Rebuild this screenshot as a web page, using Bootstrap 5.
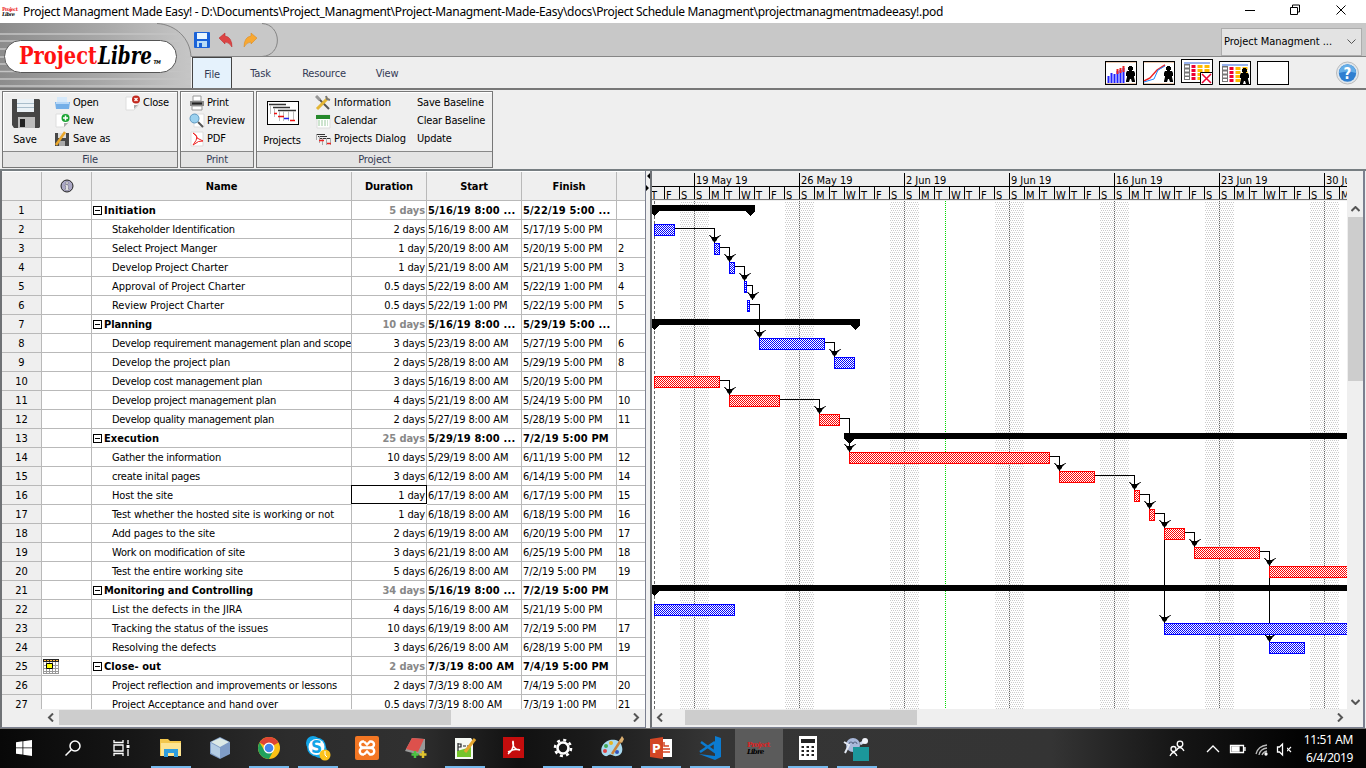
<!DOCTYPE html>
<html lang="en">
<head>
<meta charset="utf-8">
<meta name="viewport" content="width=device-width, initial-scale=1">
<title>Project Managment Made Easy!</title>
<link href="https://cdn.jsdelivr.net/npm/bootstrap@5.3.0/dist/css/bootstrap.min.css" rel="stylesheet">
<style>
body{width:1366px;height:768px;overflow:hidden;background:#efefef;color:#000;font:11px/14px "DejaVu Sans Condensed","DejaVu Sans",sans-serif;letter-spacing:-.2px;white-space:nowrap}
svg{display:block;flex:none}
.titlebar{height:23px;background:#fff;font:12px/23px "Noto Sans","Open Sans",sans-serif;letter-spacing:0}
.banner{height:67px;background:#eee}
.banner-art{left:0;top:0;z-index:0}
.strip{height:34px;background:#c8c8c8;border-bottom:1px solid #858585;padding:0 4px 0 193px}
.picker{width:141px;height:28px;background:#e3e3e3;border:1px solid #adadad;margin-top:5px;padding:0 5px 0 2px;z-index:2}
.picker,.picker:hover{font:inherit;color:#000}
.tabs{height:33px;border-bottom:2px solid #777;padding-left:192px;color:#333a55;z-index:2}
.tabs a{color:inherit;text-decoration:none;line-height:35px;height:32px;text-align:center}
.tab-on{background:#e5f2fc;border:1px solid #444;border-bottom:0;width:40px}
.tabs .tab-on{line-height:34px;height:31px}
.view-btn{width:32px;height:24px;background:#fff;border:1px solid #000}
.ribbon{height:79px;padding:1px 0 0 2px;background:#efefef}
.group{height:77px;border:1px solid #777;margin-right:3px;box-shadow:inset 1px 1px #fff}
.group-body{height:59px}
.group-name{height:16px;line-height:15px;background:#e4e4e4;border-top:1px solid #888;text-align:center;color:#333a55}
.tool{height:18px;gap:2px}
.big-tool{text-align:center}
.panes{height:559px;border-top:2px solid #777e82;background:#efefef}
.sheet{width:646px;height:557px;border-left:2px solid #6f7276;border-right:1px solid #7b8090;border-bottom:1px solid #7b8090;background:#efefef}
.rows-view{height:538px;overflow:hidden;background:#fff}
.sheet-row{height:19px;line-height:19px}
.sheet-row>div,.sheet-head>div{border-right:1px solid #b9b9b9;border-bottom:1px solid #b9b9b9;overflow:hidden;flex:none}
.sheet-head{height:30px;line-height:29px;background:#efefef;font-weight:700;text-align:center;border-top:1px solid #fff;letter-spacing:-.1px}
.c0{width:40px;background:#efefef;text-align:center}
.c1{width:50px}.c2{width:260px}.c3{width:75px;text-align:right}.c4,.c5{width:95px}.c6{width:29px;border-right:0!important}
.sheet-row .c0{letter-spacing:0}
.sheet-row .c2{padding-left:20px;letter-spacing:-.17px}.sheet-row .c6{padding-left:1px}.sheet-row .c5,.sheet-row .c4{padding-left:1px;letter-spacing:-.11px}.sheet-row .c3{padding-right:1px}
.phase>div:not(.c0){font-weight:700;letter-spacing:-.06px}
.phase>.c4:not(.c0),.phase>.c5:not(.c0){letter-spacing:.18px}
.phase .c3{color:#888}
.phase .c2{padding-left:1px!important}
.fold{width:9px;height:9px;border:1px solid #000;position:relative;margin-right:2px}
.fold::after{content:"";position:absolute;left:1px;right:1px;top:3px;height:1px;background:#000}
.now-cell{border:1px solid #000!important;margin-left:-1px;width:76px!important;height:19px;margin-top:-1px;line-height:20px}
.hscroll{height:17px;background:#efefef}
.thumb{background:#cdcdcd;height:15px}
.splitter{width:4px;background:#f0f0f0}
.chart{width:715px;border-left:2px solid #6f7276;border-right:2px solid #7b8090;border-bottom:1px solid #7b8090}
.chart text{font-size:11px;letter-spacing:-.05px}
.vscroll{width:17px;height:508px;margin-top:30px;background:#efefef;padding-top:5px}
.vthumb{width:15px;height:164px;background:#cdcdcd;margin:5px 0 0 1px}
.taskbar{height:40px;background:linear-gradient(90deg,#080808 0,#151515 9%,#2c2c2c 21%,#303030 30%,#111 38%,#1a1a1a 43%,#353535 52%,#343434 77%,#161616 86%,#030303 95%);border-top:1px solid #777}
.app{height:39px;width:48px;margin-right:1.03px;padding-bottom:1px;position:relative}
.running::after{content:"";position:absolute;left:4px;right:4px;bottom:0;height:2px;background:#76b9ed}
.app-on{background:#5b5b5b}
.clock{font:12px/18px "Noto Sans","Open Sans",sans-serif;color:#fff;letter-spacing:-.4px}
</style>
</head>
<body>
<header>
  <div class="titlebar d-flex align-items-center">
    <svg width="23" height="23" viewBox="0 0 23 23"><text x="2" y="11" font-size="5" font-weight="700" fill="#e22" textLength="16" font-family="DejaVu Serif">Project</text><text x="2" y="16" font-size="5" font-style="italic" font-weight="700" textLength="13" font-family="DejaVu Serif">Libre</text></svg>
    <span data-w="920">Project Managment Made Easy! - D:\Documents\Project_Managment\Project-Managment-Made-Easy\docs\Project Schedule Managment\projectmanagmentmadeeasy!.pod</span>
    <svg class="ms-auto" width="126" height="23" viewBox="1240 0 126 23" fill="none" stroke="#000"><path d="M1245 10.5h10M1290.500 7.500h7v7h-7zM1292.500 7v-2h7v7h-2M1336.500 5.500l9 9m0-9l-9 9"/></svg>
  </div>
  <div class="banner position-relative">
    <div class="strip d-flex align-items-start justify-content-end">
      <button class="picker btn rounded-0 d-flex align-items-center justify-content-between position-relative"><span data-w="108">Project Managment ...</span><svg width="9" height="6" fill="none" stroke="#555"><path d="M.5 .5l4 4 4-4"/></svg></button>
    </div>
    <nav class="tabs d-flex align-items-end position-relative">
      <a href="#" class="tab-on">File</a><a href="#" style="margin-left:17px;width:23px">Task</a><a href="#" style="margin-left:29px;width:46px">Resource</a><a href="#" style="margin-left:28px;width:24px">View</a>
      <div class="ms-auto d-flex align-items-center" style="gap:6px;margin-right:7px;height:31px">
        <svg width="32" height="24"><rect x=".5" y=".5" width="31" height="23" fill="#fff" stroke="#000"/><path d="M1 1.500h30M1 22.500h30" stroke="#e8c8b0"/><path d="M3.500 15v7M6.500 12v10M9.500 13v9M12.500 10v12M15.500 9v13M18.500 7v15" stroke="#22f" stroke-width="2"/><path d="M12.500 8v5M15.500 7v5M18.500 5v6" stroke="#e22" stroke-width="2"/><use href="#man" x="20" y="5"/></svg>
        <svg width="32" height="24"><defs><g id="man"><path d="M4 0h3v1h1v3h-1v1h2l1 2v3h-1v1l1 4v1h-3l-1-3h-1l-1 3H1v-1l1-4v-1H1V7l1-2h2V4H3V1h1z"/></g></defs><rect x=".5" y=".5" width="31" height="23" fill="#fff" stroke="#000"/><path d="M1 1.500h30M1 22.500h30" stroke="#e8c8b0"/><path d="M1 20l6-3 7-8 8-5" stroke="#e22" stroke-width="1.500" fill="none"/><path d="M1 21l10-3 4-9 7-4" stroke="#28f" fill="none"/><use href="#man" x="20" y="5"/></svg>
        <svg width="32" height="27"><use href="#grid"/><path d="M19.500 13.500h12v12h-12z" fill="#fff" stroke="#000"/><path d="M21 15l9 9m0-9l-9 9" stroke="#e03" stroke-width="1.500"/></svg>
        <svg width="32" height="24"><defs><g id="grid"><rect x=".5" y=".5" width="31" height="23" fill="#fff" stroke="#000"/><path d="M3 4h26" stroke="#99b3ee" stroke-width="2"/><path d="M3 5h6v16H3z" fill="#777"/><path d="M4 7.500h4M4 11.500h4M4 15.500h4M4 19h4" stroke="#fff" stroke-width="2"/><path d="M12.500 6v15" stroke="#e03" stroke-width="4" stroke-dasharray="3 1"/><path d="M19 6v15M26 6v12" stroke="#fb0" stroke-width="5" stroke-dasharray="3 1"/></g></defs><use href="#grid"/><use href="#man" x="20" y="7"/></svg>
        <div class="view-btn"></div>
        <svg width="23" height="26" style="margin-left:41px"><circle cx="11.500" cy="13" r="11" fill="#dfe6ec" stroke="#bbb"/><circle cx="11.500" cy="13" r="8.700" fill="#2f7fd0"/><path d="M3 13a8.500 8.500 0 0117 0q-8-3-17 0" fill="#65aee8"/><text x="7.500" y="18.500" fill="#fff" font-size="15" font-weight="700">?</text></svg>
      </div>
    </nav>
    <svg class="banner-art position-absolute" width="280" height="65" viewBox="0 23 280 65">
      <defs><linearGradient id="steel"><stop offset="0" stop-color="#8c8c8c"/><stop offset=".55" stop-color="#a9a9a9"/><stop offset="1" stop-color="#c6c6c6"/></linearGradient></defs>
      <path d="M157 23c18 1 33 15 34 33v32H0V23z" fill="url(#steel)"/>
      <path d="M0 34h177M0 41h182M0 49h187M0 57h190M0 64h190M0 71.500h190M0 79h190M0 86h190" stroke="#c4c4c4" stroke-width="1.500"/>
      <path d="M157 23.500c19 1 33 15 34 33M262 23.500c20 1 21 32 0 33" stroke="#858585" fill="none"/>
      <rect x="4.500" y="40.500" width="172" height="32" rx="16" fill="#fff" stroke="#555"/>
      <g font-family="DejaVu Serif Condensed,DejaVu Serif" font-weight="700" font-size="24"><text x="19" y="64" fill="#f11" textLength="78" lengthAdjust="spacingAndGlyphs" style="letter-spacing:0">Project</text><text x="98" y="64" font-style="italic" textLength="54" lengthAdjust="spacingAndGlyphs" style="letter-spacing:0">Libre</text></g>
      <text x="153.500" y="64" font-size="5" font-style="italic" font-weight="700">TM</text>
      <rect x="194" y="32" width="16" height="16" rx="1" fill="#1a62d8"/><path d="M197 33h10v6h-10z" fill="#e9f6ff"/><path d="M197 41h10v6h-10z" fill="#b9dcf6"/><path d="M199 43h3v4h-3z" fill="#1a62d8"/>
      <path d="M219 38l6-5v3q7 1 7 11q-3-5-7-5v2z" fill="#dc4444" stroke="#b22" stroke-width=".5"/>
      <path d="M257 38l-6-5v3q-7 1-7 11q3-5 7-5v2z" fill="#f8a832" stroke="#d88416" stroke-width=".5"/>
    </svg>
  </div>
  <div class="ribbon d-flex">
    <section class="group" style="width:176px"><div class="group-body d-flex">
      <div class="big-tool" style="width:44px;padding-top:7px"><svg width="30" height="30" style="margin-left:8px"><path d="M1 0h27l1 1v27l-1 1H3l-2-3z" fill="#454545"/><path d="M6 0h17v13H6z" fill="#eaf1f6"/><path d="M6 4.500h17M6 8.500h17" stroke="#a9bdcb"/><path d="M7 18h17v11H7z" fill="#bbb"/><path d="M9 20h5v8H9z" fill="#222"/></svg><div style="margin-top:4px">Save</div></div>
      <div style="padding:2px 0 0 7px;width:78px">
        <div class="tool d-flex align-items-center"><svg width="17" height="16"><path d="M3 2h10v5H3z" fill="#d6e9fa"/><path d="M1 7h15l-1 7H2z" fill="#74afe8"/><path d="M2 7h13v2H2z" fill="#b8d8f7"/></svg>Open</div>
        <div class="tool d-flex align-items-center"><svg width="17" height="16"><path d="M2 1h12v9l-4 4H2z" fill="#fff" stroke="#ddd"/><path d="M14 10l-4 0v4z" fill="#aaa"/><circle cx="11.500" cy="5" r="4" fill="#18a331"/><path d="M11.500 2.500v5M9 5h5" stroke="#fff" stroke-width="1.500"/></svg>New</div>
        <div class="tool d-flex align-items-center"><svg width="17" height="16"><path d="M1 2h14v13H1z" fill="#484848"/><path d="M4 2h8v5H4z" fill="#ddd"/><path d="M5 10h6v5H5z" fill="#aaa"/><path d="M2 14L11 1" stroke="#eaa72c" stroke-width="2.500"/></svg>Save as</div>
      </div>
      <div style="padding:2px 0 0 0"><div class="tool d-flex align-items-center"><svg width="16" height="16"><path d="M1 2h12v9l-4 4H1z" fill="#fff" stroke="#ddd"/><path d="M13 10l-4 0v4z" fill="#aaa"/><circle cx="11" cy="4.500" r="4" fill="#c2281e"/><path d="M9.500 3l3 3m0-3l-3 3" stroke="#fff" stroke-width="1.300"/></svg>Close</div></div>
    </div><div class="group-name">File</div></section>
    <section class="group" style="width:74px;margin:0 2px 0 -1px"><div class="group-body" style="padding:2px 0 0 8px">
      <div class="tool d-flex align-items-center"><svg width="16" height="16"><path d="M4 1h8v5H4z" fill="#fff" stroke="#999"/><path d="M1 6h14v5H1z" fill="#888"/><path d="M3 8.500h10" stroke="#222" stroke-width="2"/><path d="M3 11h10v4H3z" fill="#fff" stroke="#999"/></svg>Print</div>
      <div class="tool d-flex align-items-center"><svg width="16" height="16"><path d="M5 1h10v13H5z" fill="#fff" stroke="#ddd"/><path d="M9 9l5 5" stroke="#555" stroke-width="2"/><circle cx="5.500" cy="5.500" r="4.500" fill="#9bd1ef" stroke="#5e98c0"/></svg><span data-w="38">Preview</span></div>
      <div class="tool d-flex align-items-center"><svg width="16" height="16"><path d="M2 1h12v14H2z" fill="#fff" stroke="#ddd"/><path d="M4 2q4 2 4 5l6 3q-4-1-10 4q4-5 4-8q-1-2-4-4" fill="none" stroke="#e22"/></svg>PDF</div>
    </div><div class="group-name">Print</div></section>
    <section class="group" style="width:237px"><div class="group-body d-flex">
      <div class="big-tool" style="width:50px;padding-top:9px"><svg width="32" height="25" style="margin-left:10px"><rect x=".5" y=".5" width="31" height="23" fill="#fff" stroke="#000"/><path d="M2 3.500h17M6 6.500h17M11 9.500h18" stroke="#333" stroke-width="1.500"/><path d="M3.500 4v9M7.500 7v9M12.500 10v10M16.500 10v10M21.500 10v10M26.500 10v10" stroke="#bbb"/><path d="M7 12.500h3M11 15.500h6M23 19.500h5" stroke="#e11" stroke-width="1.500"/><path d="M17 17.500h5" stroke="#22e" stroke-width="1.500"/></svg><div style="margin-top:8px">Projects</div></div>
      <div style="padding:2px 0 0 8px;width:110px">
        <div class="tool d-flex align-items-center"><svg width="17" height="16" fill="none"><path d="M2 2l12 12" stroke="#555" stroke-width="2"/><path d="M2 14L13 3" stroke="#e4b636" stroke-width="3"/><path d="M11 1l1 3 3 1" stroke="#777" stroke-width="2"/><path d="M1 1l4 4" stroke="#999" stroke-width="3"/></svg><span data-w="57">Information</span></div>
        <div class="tool d-flex align-items-center"><svg width="17" height="16"><path d="M2 2h13v13H2z" fill="#fff" stroke="#ddd"/><path d="M1 2h14v4H1z" fill="#26892b"/><path d="M3 8h10M3 10h10M3 12h10" stroke="#9bc99e" stroke-dasharray="2 1"/></svg>Calendar</div>
        <div class="tool d-flex align-items-center"><svg width="17" height="16"><path d="M1 3.500h9M3 5.500h9M5 7.500h11" stroke="#333"/><path d="M1.500 3v6M4.500 5v7M7.500 7v7M11.500 7v7M15.500 7v7" stroke="#aaa"/><path d="M4 9.500h5M12 12.500h4" stroke="#e22" stroke-width="1.500"/></svg><span data-w="72">Projects Dialog</span></div>
      </div>
      <div style="padding-top:2px"><div class="tool d-flex align-items-center">Save Baseline</div><div class="tool d-flex align-items-center">Clear Baseline</div><div class="tool d-flex align-items-center">Update</div></div>
    </div><div class="group-name">Project</div></section>
  </div>
</header>
<main class="panes d-flex">
  <section class="sheet">
    <div class="rows-view">
      <div class="sheet-head d-flex"><div class="c0"></div><div class="c1 d-flex align-items-center justify-content-center"><svg width="14" height="14"><circle cx="7" cy="7" r="6" fill="#aaa7c4" stroke="#222"/><path d="M6 3h2v2H6zM5 6h3v4h1v1H5v-1h1V7H5z" fill="#fff" stroke="#555" stroke-width=".4"/></svg></div><div class="c2">Name</div><div class="c3 text-center">Duration</div><div class="c4">Start</div><div class="c5">Finish</div><div class="c6"></div></div>
      <div id="rows"></div>
    </div>
    <div class="hscroll d-flex align-items-center" style="padding-left:45px"><svg width="12" height="9" fill="none" stroke="#555" stroke-width="2"><path d="M6 .5l-4 4 4 4"/></svg><div class="thumb" style="width:392px"></div><svg class="ms-auto" width="12" height="9" fill="none" stroke="#555" stroke-width="2"><path d="M1 .5l4 4-4 4"/></svg></div>
  </section>
  <div class="splitter"><svg width="4" height="24"><path d="M4 2v6L1 5zM0 14v6l3-3z"/></svg></div>
  <section class="chart">
    <div class="d-flex"><svg id="gantt" width="695" height="538" viewBox="652 171 695 538" shape-rendering="crispEdges"></svg>
      <div class="vscroll d-flex flex-column"><svg width="9" height="6" style="margin-left:4px" fill="none" stroke="#555" stroke-width="2"><path d="M.5 5l4-4 4 4"/></svg><div class="vthumb"></div><svg class="mt-auto mb-1" width="9" height="6" style="margin-left:4px" fill="none" stroke="#555" stroke-width="2"><path d="M.5 1l4 4 4-4"/></svg></div></div>
    <div class="hscroll d-flex align-items-center" style="padding-left:3px;padding-right:17px"><svg width="12" height="9" fill="none" stroke="#555" stroke-width="2"><path d="M7 .5l-4 4 4 4"/></svg><div class="thumb" style="width:232px;margin-left:18px"></div><svg class="ms-auto" width="9" height="9" fill="none" stroke="#555" stroke-width="2"><path d="M1 .5l4 4-4 4"/></svg></div>
  </section>
</main>
<footer class="taskbar d-flex align-items-center">
  <div class="app d-flex align-items-center justify-content-center"><svg width="16" height="16" fill="#fff"><path d="M0 2.300l6.500-1V7.500H0zM7.300 1.200L16 0v7.500H7.300zM0 8.300h6.500v6.200L0 13.700zM7.300 8.300H16V16l-8.700-1.200z"/></svg></div>
  <div class="app d-flex align-items-center justify-content-center"><svg width="16" height="16" fill="none" stroke="#fff" stroke-width="1.500"><circle cx="10" cy="6" r="5"/><path d="M6.500 9.500L.5 15.500"/></svg></div>
  <div class="app d-flex align-items-center justify-content-center"><svg width="18" height="16" fill="none" stroke="#fff" stroke-width="1.300"><path d="M1 0v2.500h9V0M1 16v-2.500h9V16M1 5h9v6H1zM15 0v4M15 9v7"/><path d="M13.500 5h3v3h-3z" fill="#fff" stroke="none"/></svg></div>
  <div class="app running d-flex align-items-center justify-content-center"><svg width="22" height="20"><path d="M0 3V1h8l2 2h11v15H0z" fill="#f3c74c"/><path d="M1 5h20v13H1z" fill="#fde491"/><path d="M4 19v-8h14v8h-4v-4H8v4z" fill="#2f9ede"/></svg></div>
  <div class="app d-flex align-items-center justify-content-center"><svg width="22" height="22"><path d="M11 0l10 5v12l-10 5L1 17V5z" fill="#7f9cc6"/><path d="M11 1l9 4-9 5-9-5z" fill="#dce9e6"/><path d="M2 6l9 5v10L2 16z" fill="#b4cde4"/></svg></div>
  <div class="app running d-flex align-items-center justify-content-center"><svg width="22" height="22" viewBox="-11 -11 22 22"><circle r="11" fill="#fbc116"/><path d="M0 0L-9.500-5.500A11 11 0 019.500-5.500z" fill="#de4435"/><path d="M-9.500-5.500A11 11 0 000 11L4.500 2.500-4.500 2.500z" fill="#1fa15c"/><circle r="5.500" fill="#fff"/><circle r="4.300" fill="#4286ee"/></svg></div>
  <div class="app running d-flex align-items-center justify-content-center"><svg width="26" height="26"><circle cx="8" cy="8" r="7" fill="#12a5e8"/><circle cx="15" cy="16" r="7" fill="#12a5e8"/><circle cx="11.500" cy="12" r="9.500" fill="#12a5e8"/><circle cx="11.500" cy="12" r="8" fill="#fff"/><text x="6" y="18" font-size="17" font-weight="700" fill="#12a5e8">S</text><circle cx="20" cy="20" r="5.500" fill="#fcc21b"/><path d="M20 16v4l2 2" stroke="#fff" fill="none"/></svg></div>
  <div class="app d-flex align-items-center justify-content-center"><svg width="24" height="24"><rect width="24" height="24" rx="2" fill="#f37623"/><path d="M9 5.500H8a3 3 0 000 6h8a3 3 0 000-6h-1l-3 3-3-3M9 18.500H8a3 3 0 010-6.500h8a3 3 0 010 6.500h-1l-3-3-3 3" stroke="#fff" stroke-width="2.400" fill="none"/></svg></div>
  <div class="app d-flex align-items-center justify-content-center"><svg width="24" height="24"><path d="M8 2l13 1v10l-5 6L1 15z" fill="#999"/><path d="M8 2l12 1-6 13-12-3z" fill="#dd514c"/><path d="M11 15v7M7.500 18.500h7" stroke="#4bc142" stroke-width="2.500"/><path d="M19 15v7M15.500 18.500h7" stroke="#e1c52f" stroke-width="2.500"/></svg></div>
  <div class="app running d-flex align-items-center justify-content-center"><svg width="24" height="24"><path d="M2 2h16l2 3v18H2z" fill="#f6f9f4"/><path d="M4 15l14-4v10H4z" fill="#75c52b"/><path d="M5 7v8M5 8h3v3H5M10 10h3M14 10h3" stroke="#222" fill="none" stroke-width="1.200"/><path d="M12 16L22 3" stroke="#e6a72f" stroke-width="3"/></svg></div>
  <div class="app d-flex align-items-center justify-content-center"><svg width="22" height="22"><path d="M0 0h21v21H0z" fill="#c40d0d"/><path d="M5 17c5-4 6-9 5-13c-1 5 2 9 7 9q-5-2-12 2" fill="none" stroke="#fff" stroke-width="1.500"/></svg></div>
  <div class="app running d-flex align-items-center justify-content-center"><svg width="20" height="20" viewBox="-10 -10 20 20" fill="none" stroke="#fff"><circle r="5.500" stroke-width="2.600"/><circle r="8" stroke-width="2.600" stroke-dasharray="3 3.280"/></svg></div>
  <div class="app running d-flex align-items-center justify-content-center"><svg width="24" height="24"><path d="M10 4C0 7-1 18 5 20c3 1 4-3 7-1c4 3 12 0 10-8C21 4 14 3 10 4z" fill="#a9d9ef"/><circle cx="5" cy="15" r="2" fill="#d44"/><circle cx="6" cy="10" r="2" fill="#4a5"/><circle cx="11" cy="7" r="2" fill="#e6b422"/><circle cx="17" cy="16" r="2" fill="#35b"/><path d="M12 18L21 4" stroke="#c98239" stroke-width="2.500"/><path d="M19 5l3-5 2 3-2 4z" fill="#d9ae70"/></svg></div>
  <div class="app running d-flex align-items-center justify-content-center"><svg width="24" height="24"><path d="M12 3h11v18H12z" fill="#fff"/><path d="M14 13h7M14 16h7M15 6v4h5" stroke="#d24625" stroke-width="1.500" fill="none"/><path d="M1 3l13-2v22L1 21z" fill="#d24625"/><text x="3" y="17" font-size="13" font-weight="700" fill="#fff">P</text></svg></div>
  <div class="app running d-flex align-items-center justify-content-center"><svg width="24" height="24"><path d="M17 0l6 2v19l-6 3-16-6 16 2z" fill="#0b7bd0"/><path d="M17 6v10L3 6M17 6L2 16" fill="none" stroke="#0b7bd0" stroke-width="2.500"/></svg></div>
  <div class="app app-on d-flex align-items-center justify-content-center"><svg width="26" height="16"><text x="1" y="7" font-family="DejaVu Serif" font-size="7" font-weight="700" fill="#d22" textLength="23">Project</text><text x="1" y="14" font-family="DejaVu Serif" font-size="7" font-weight="700" font-style="italic" textLength="17">Libre</text></svg></div>
  <div class="app running d-flex align-items-center justify-content-center"><svg width="18" height="24"><path d="M0 0h18v24H0z" fill="#fff"/><path d="M2 3h14v4H2z" fill="#222"/><path d="M2.500 11h13M2.500 15h13M2.500 19h13" stroke="#222" stroke-width="2" stroke-dasharray="2.500 2.500"/></svg></div>
  <div class="app running d-flex align-items-center justify-content-center"><svg width="28" height="26"><circle cx="10" cy="10" r="7" fill="#a9b8da"/><path d="M1 7l5 3-4 8" stroke="#e4e9f2" stroke-width="2" fill="none"/><path d="M17 9l5-3" stroke="#cdd6ea" stroke-width="3"/><circle cx="22" cy="6" r="3" fill="#f2f4fa"/><path d="M6 9a2 2 0 114 0 2 2 0 114 0" stroke="#596684" fill="none"/><path d="M10 12h16v14H10z" fill="#1b979b"/></svg></div>
  <div class="ms-auto d-flex align-items-center" style="padding-right:13px">
    <svg width="118" height="24" viewBox="1169 736 118 24" fill="none" stroke="#fff" stroke-width="1.300"><circle cx="1180" cy="743" r="2.800"/><path d="M1176 750q4-7 8 0"/><circle cx="1173.500" cy="748" r="2.500"/><path d="M1170 755q3.500-7 7 0M1207 751l6-6 6 6"/><path d="M1230.500 744.500h13v7h-13zM1245 746v4"/><path d="M1232 746h7v4h-7z" fill="#fff"/><path d="M1256 753q2-8 11-9M1259 754q1-6 8-7M1262 754q1-3 5-4" stroke="#bbb"/><circle cx="1266" cy="753" r="1" fill="#fff"/><path d="M1277.500 746h2l3-3v11l-3-3h-2z"/></svg>
    <svg width="9" height="24" fill="none" stroke="#fff" stroke-width="1.200" style="margin-right:8px"><path d="M-1 10l5 5m0-5l-5 5"/></svg>
    <div class="clock text-end"><div>11:51 AM</div><div>6/4/2019</div></div>
  </div>
</footer>
<script src="https://cdn.jsdelivr.net/npm/bootstrap@5.3.0/dist/js/bootstrap.bundle.min.js"></script>
<script>
// name, duration, start, finish, predecessor; phases start with "*"
const tasks = `*Initiation|5 days|5/16/19 8:00 ...|5/22/19 5:00 ...|
Stakeholder Identification|2 days|5/16/19 8:00 AM|5/17/19 5:00 PM|
Select Project Manger|1 day|5/20/19 8:00 AM|5/20/19 5:00 PM|2
Develop Project Charter|1 day|5/21/19 8:00 AM|5/21/19 5:00 PM|3
Approval of Project Charter|0.5 days|5/22/19 8:00 AM|5/22/19 1:00 PM|4
Review Project Charter|0.5 days|5/22/19 1:00 PM|5/22/19 5:00 PM|5
*Planning|10 days|5/16/19 8:00 ...|5/29/19 5:00 ...|
Develop requirement management plan and scope|3 days|5/23/19 8:00 AM|5/27/19 5:00 PM|6
Develop the project plan|2 days|5/28/19 8:00 AM|5/29/19 5:00 PM|8
Develop cost management plan|3 days|5/16/19 8:00 AM|5/20/19 5:00 PM|
Develop project management plan|4 days|5/21/19 8:00 AM|5/24/19 5:00 PM|10
Develop quality management plan|2 days|5/27/19 8:00 AM|5/28/19 5:00 PM|11
*Execution|25 days|5/29/19 8:00 ...|7/2/19 5:00 PM|
Gather the information|10 days|5/29/19 8:00 AM|6/11/19 5:00 PM|12
create inital pages|3 days|6/12/19 8:00 AM|6/14/19 5:00 PM|14
Host the site|1 day|6/17/19 8:00 AM|6/17/19 5:00 PM|15
Test whether the hosted site is working or not|1 day|6/18/19 8:00 AM|6/18/19 5:00 PM|16
Add pages to the site|2 days|6/19/19 8:00 AM|6/20/19 5:00 PM|17
Work on modification of site|3 days|6/21/19 8:00 AM|6/25/19 5:00 PM|18
Test the entire working site|5 days|6/26/19 8:00 AM|7/2/19 5:00 PM|19
*Monitoring and Controlling|34 days|5/16/19 8:00 ...|7/2/19 5:00 PM|
List the defects in the JIRA|4 days|5/16/19 8:00 AM|5/21/19 5:00 PM|
Tracking the status of the issues|10 days|6/19/19 8:00 AM|7/2/19 5:00 PM|17
Resolving the defects|3 days|6/26/19 8:00 AM|6/28/19 5:00 PM|19
*Close- out|2 days|7/3/19 8:00 AM|7/4/19 5:00 PM|
Project reflection and improvements or lessons|2 days|7/3/19 8:00 AM|7/4/19 5:00 PM|20
Project Acceptance and hand over|0.5 days|7/3/19 8:00 AM|7/3/19 1:00 PM|21`.split('\n').map(l => l.split('|'));
// drawn width of each name in the Name column, by row
const nameWidth = [52, 123, 105, 116, 133, 112, 48, 239, 118, 150, 164, 162, 55, 109, 88, 61, 222, 103, 133, 131, 149, 130, 156, 104, 57, 225, 166];
const calendarIcon = '<svg width="16" height="16" style="margin:2px 0 0 1px"><path d="M0 0h16v3H0z" fill="#222"/><path d="M1 1.500h14" stroke="#fb4" stroke-dasharray="2 1"/><path d="M0 3h16v12H0z" fill="#fff"/><path d="M.5 3v12M3.500 3v12M6.500 3v12M9.500 3v12M12.500 3v12M15.500 3v12M0 6.500h16M0 9.500h16M0 12.500h16M0 14.500h16" stroke="#999"/><path d="M3.500 4.500h6v5h-6z" fill="#ff0" stroke="#000"/></svg>';
document.getElementById('rows').innerHTML = tasks.map((t, i) => {
  const phase = t[0][0] === '*';
  return `<div class="sheet-row d-flex ${phase ? 'phase' : ''}"><div class="c0">${i + 1}</div><div class="c1">${i === 24 ? calendarIcon : ''}</div>` +
    `<div class="c2 ${phase ? 'd-flex align-items-center' : ''}">${phase ? '<span class="fold"></span>' : ''}<span data-w="${nameWidth[i]}">${t[0].replace('*', '')}</span></div>` +
    `<div class="c3 ${i === 15 ? 'now-cell' : ''}">${t[1]}</div><div class="c4">${t[2]}</div><div class="c5">${t[3]}</div><div class="c6">${t[4]}</div></div>`;
}).join('');

// Gantt chart: 15px per day, the first column is 5/16
const DAY = 15, X0 = 649, TOP = 201, ROW = 19;
const at = s => {
  const [, m, d, h] = s.match(/(\d+)\/(\d+)\/19 (\d+):00/);
  const days = Math.round((Date.UTC(2019, m - 1, d) - Date.UTC(2019, 4, 16)) / 864e5);
  return Math.round(X0 + DAY * (days + (+h + (+h < 8 ? 12 : 0)) / 24));
};
let g = `<defs>
<pattern id="dots" width="4" height="4" patternUnits="userSpaceOnUse"><path d="M0 0h1v1h-1zM2 0h1v1h-1zM1 2h1v1h-1zM3 2h1v1h-1z" fill="#cbcbcb"/></pattern>
<pattern id="blue" width="2" height="2" patternUnits="userSpaceOnUse"><path d="M0 0h2v2h-2z" fill="#fff"/><path d="M0 0h1v1h-1zM1 1h1v1h-1z" fill="#00f"/></pattern>
<pattern id="red" width="2" height="2" patternUnits="userSpaceOnUse"><path d="M0 0h2v2h-2z" fill="#fff"/><path d="M0 0h1v1h-1zM1 1h1v1h-1z" fill="#f00"/></pattern>
</defs><rect x="652" y="171" width="695" height="30" fill="#efefef"/><rect x="652" y="201" width="695" height="508" fill="#fff"/>`;
['19 May 19', '26 May 19', '2 Jun 19', '9 Jun 19', '16 Jun 19', '23 Jun 19', '30 Jun 19'].forEach((w, i) => {
  const x = 694 + i * 105;
  g += `<rect x="${x - 14}" y="201" width="29" height="508" fill="url(#dots)"/><path d="M${x + .5} 201v508" stroke="#666" stroke-dasharray="1 1"/><path d="M${x + .5} 173v14" stroke="#000"/><text x="${x + 2}" y="184">${w}</text>`;
});
for (let i = 0; i < 47; i++) {
  const x = X0 + i * DAY;
  g += `<path d="M${x + .5} 187v12" stroke="#000"/><text x="${x + 2}" y="199">${'TFSSMTW'[i % 7]}</text>`;
}
g += `<path d="M652 186.500h695" stroke="#000"/><path d="M652 199.500h695" stroke="#777"/><path d="M654.500 201v508" stroke="#666" stroke-dasharray="3 2"/><path d="M945.500 201v508" stroke="#0d0" stroke-dasharray="1 1"/>`;
tasks.forEach((t, i) => {
  if (!t[4] || i > 24) return;
  const p = tasks[t[4] - 1], from = at(p[3]), y1 = TOP + (t[4] - 1) * ROW + 9.5, y2 = TOP + i * ROW + 4;
  let to = at(t[2]);
  if (to - from < 5) to = from + 5;
  g += `<path d="M${from} ${y1 - 1}H${to + .5}V${y2 - 3}" fill="none" stroke="#000"/><path d="M${to + .5} ${y2}l-3-5-3-3 3.500 2h5l3.500-2-3 3z" fill="#000" stroke="#000" stroke-width=".5"/>`;
});
const critical = [10, 11, 12, 14, 15, 16, 17, 18, 19, 20];
tasks.forEach((t, i) => {
  if (i > 23) return;
  const y = TOP + i * ROW;
  if (t[0][0] === '*') {
    const a = at(t[2]), b = at(t[3]);
    g += `<path d="M${a - 5} ${y + 4}H${b + 5}v6l-5 5-5-5H${a + 5}l-5 5-5-5z"/>`;
  } else {
    const a = at(t[2]), b = at(t[3]), red = critical.includes(i + 1);
    g += `<rect x="${a + .5}" y="${y + 4.5}" width="${b - a - 1}" height="11" fill="url(#${red ? 'red' : 'blue'})" stroke="${red ? '#f00' : '#00f'}"/>`;
  }
});
document.getElementById('gantt').innerHTML = g;
// spread labels that have a set width
document.querySelectorAll('[data-w]').forEach(e => {
  e.style.letterSpacing = '0';
  e.style.letterSpacing = (e.dataset.w - e.getBoundingClientRect().width) / e.textContent.length + 'px';
});
</script>
</body>
</html>
